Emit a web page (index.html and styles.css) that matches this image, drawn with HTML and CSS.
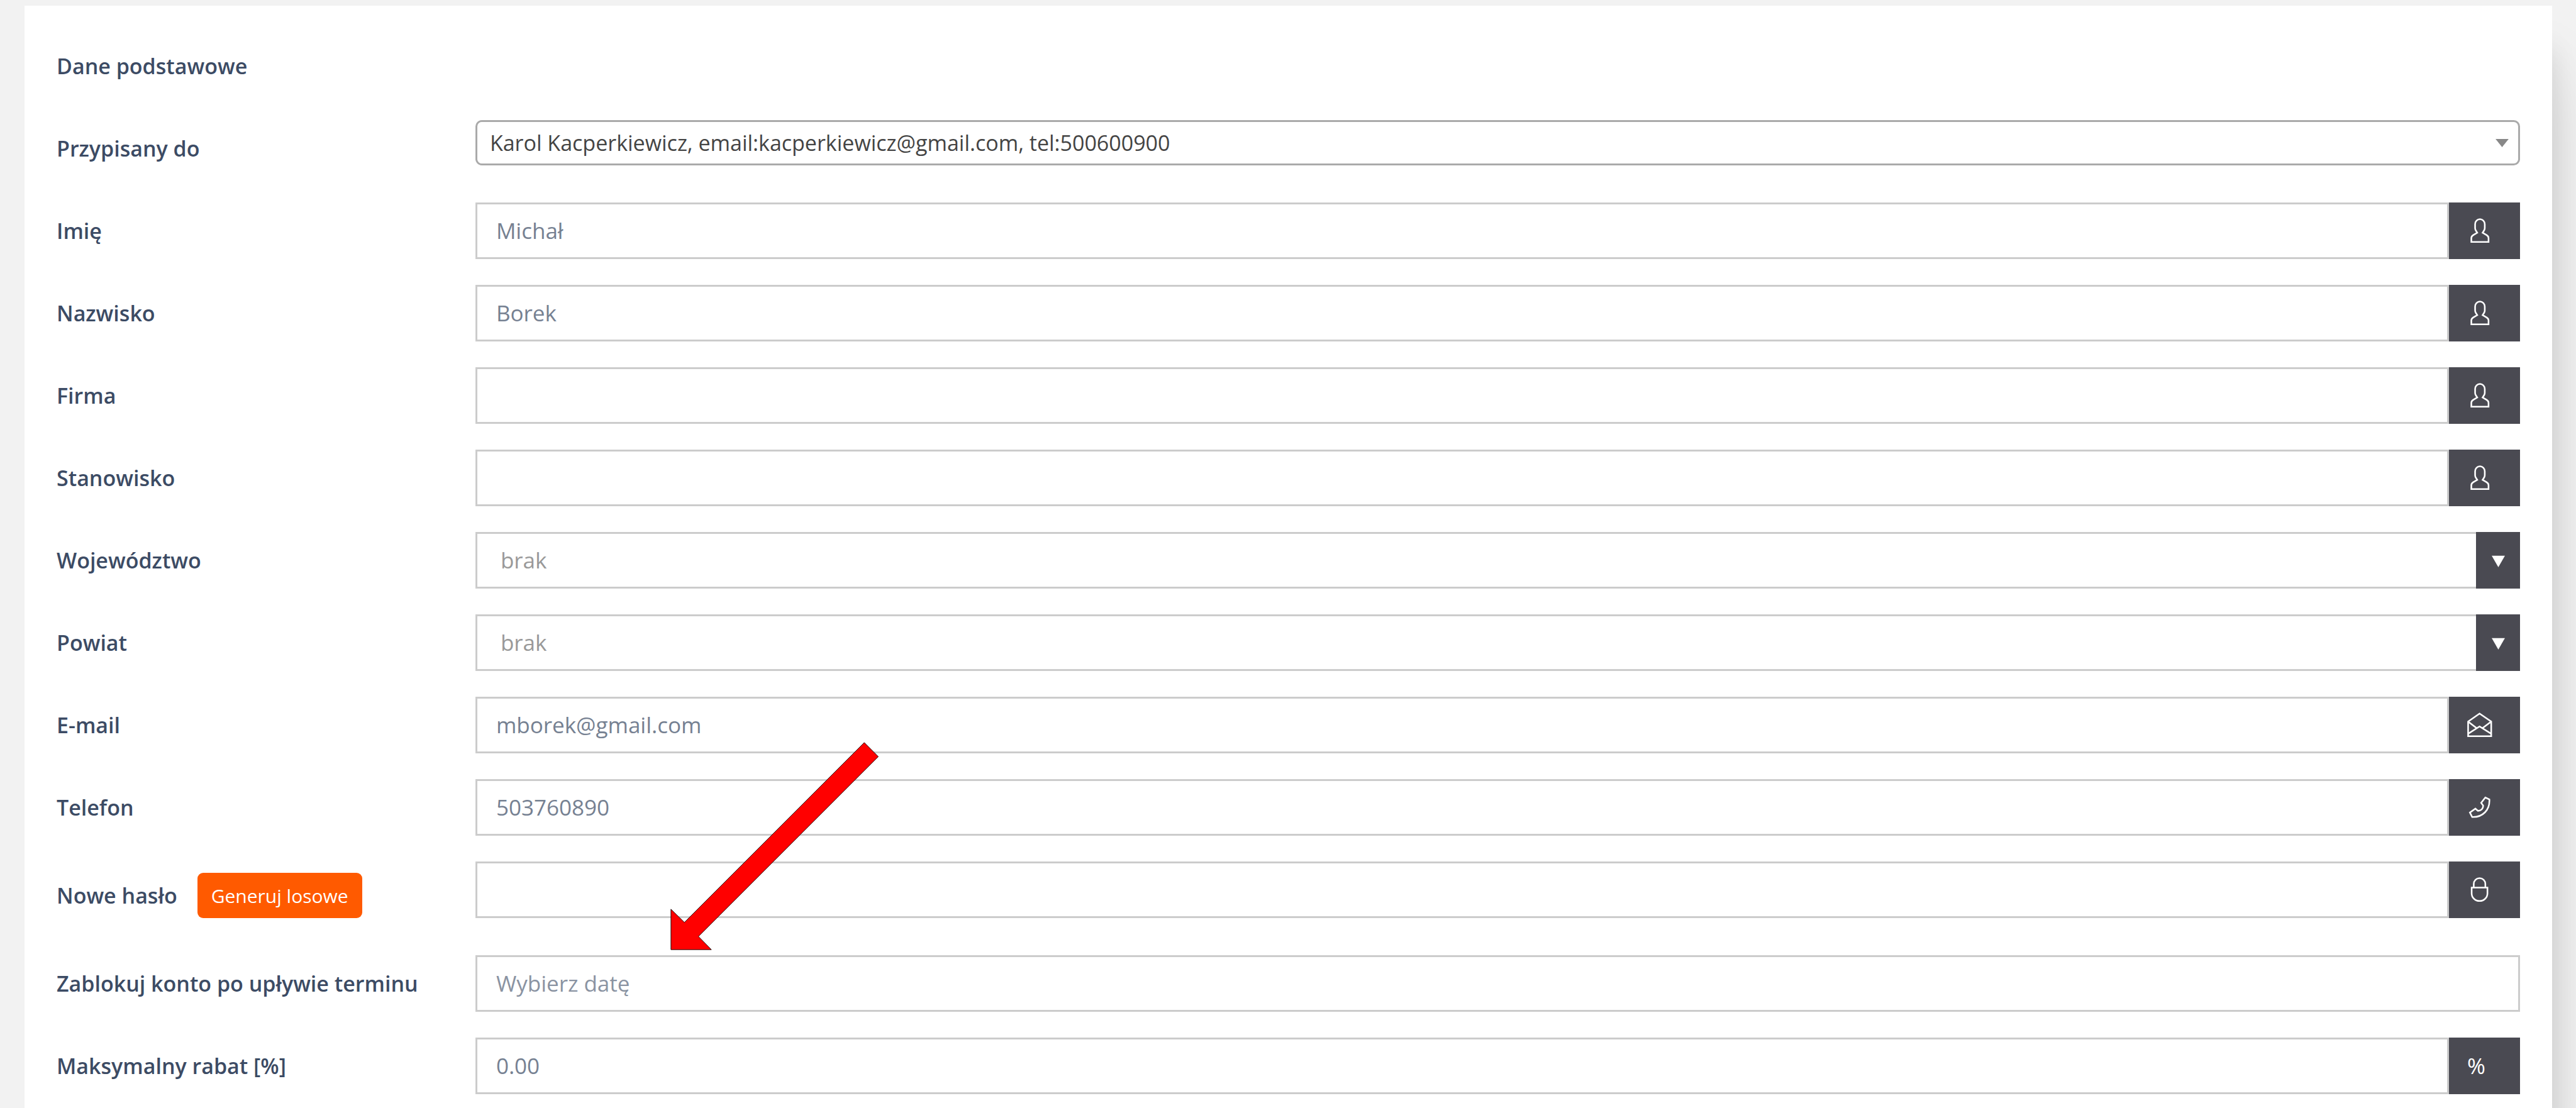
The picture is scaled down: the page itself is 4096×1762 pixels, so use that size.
FILE: index.html
```html
<!DOCTYPE html>
<html lang="pl">
<head>
    <meta charset="UTF-8">
    <meta name="viewport" content="width=device-width, initial-scale=1.0">
    <title>Dane podstawowe</title>
    <link rel="stylesheet" href="styles.css">
</head>
<body>
    <!-- shared icons -->
    <svg class="sprite" aria-hidden="true">
        <symbol id="icon-user" viewBox="0 0 48 48">
            <path d="M7.700 44.200V37c0-2.600 1.300-4.100 3.500-5.500L18.700 27l-2.700-4.200c-.900-1.400-1.300-2.600-1.300-4.300V11a9 9.300 0 0 1 18 0v7.500c0 1.700-.4 2.900-1.300 4.300L28.700 27l7.500 4.500c2.200 1.400 3.500 2.900 3.500 5.500v7.200z"/>
        </symbol>
        <symbol id="icon-mail" viewBox="0 0 48 48">
            <path d="M1.700 17 23 2l21.700 15v27.300h-43zM1.700 17l15.600 12M44.700 17 28.700 29M1.700 39.700 23 26l21.700 13.700"/>
        </symbol>
        <symbol id="icon-phone" viewBox="0 0 48 48">
            <path d="M33.700 5l7.600 3.500C42.500 28 29 42 9.300 41.300L5 33l10.300-7.300 4.700 4c5.500 0 10-4 9.700-9.700L26 15z"/>
        </symbol>
        <symbol id="icon-lock" viewBox="0 0 48 48">
            <path d="M12.200 19v-6.500a10.800 10.800 0 0 1 21.600 0V19M8.300 19.300h29.400V30a14.700 14.300 0 0 1-29.400 0z"/>
        </symbol>
    </svg>

    <form class="card">
        <h2 class="heading">Dane podstawowe</h2>

        <div class="row">
            <div class="label"><label for="owner">Przypisany do</label></div>
            <div class="picker">
                <select id="owner" class="picker-select">
                    <option>Karol Kacperkiewicz, email:kacperkiewicz@gmail.com, tel:500600900</option>
                </select>
                <svg class="picker-caret" viewBox="0 0 24 15" aria-hidden="true"><path d="M0 0h24L12 15z"/></svg>
            </div>
        </div>

        <div class="row">
            <div class="label"><label for="firstName">Imię</label></div>
            <div class="field">
                <input type="text" id="firstName" class="control" value="Michał">
                <span class="addon"><svg class="icon"><use href="#icon-user"/></svg></span>
            </div>
        </div>

        <div class="row">
            <div class="label"><label for="lastName">Nazwisko</label></div>
            <div class="field">
                <input type="text" id="lastName" class="control" value="Borek">
                <span class="addon"><svg class="icon"><use href="#icon-user"/></svg></span>
            </div>
        </div>

        <div class="row">
            <div class="label"><label for="company">Firma</label></div>
            <div class="field">
                <input type="text" id="company" class="control">
                <span class="addon"><svg class="icon"><use href="#icon-user"/></svg></span>
            </div>
        </div>

        <div class="row">
            <div class="label"><label for="position">Stanowisko</label></div>
            <div class="field">
                <input type="text" id="position" class="control">
                <span class="addon"><svg class="icon"><use href="#icon-user"/></svg></span>
            </div>
        </div>

        <div class="row">
            <div class="label"><label for="region">Województwo</label></div>
            <div class="field">
                <select id="region" class="control control-select">
                    <option>brak</option>
                </select>
                <span class="addon addon-arrow"><svg class="arrow-down" viewBox="0 0 24 24"><path d="M0 3h24L12 24z"/></svg></span>
            </div>
        </div>

        <div class="row">
            <div class="label"><label for="county">Powiat</label></div>
            <div class="field">
                <select id="county" class="control control-select">
                    <option>brak</option>
                </select>
                <span class="addon addon-arrow"><svg class="arrow-down" viewBox="0 0 24 24"><path d="M0 3h24L12 24z"/></svg></span>
            </div>
        </div>

        <div class="row">
            <div class="label"><label for="email">E-mail</label></div>
            <div class="field">
                <input type="email" id="email" class="control" value="mborek@gmail.com">
                <span class="addon"><svg class="icon"><use href="#icon-mail"/></svg></span>
            </div>
        </div>

        <div class="row">
            <div class="label"><label for="phone">Telefon</label></div>
            <div class="field">
                <input type="tel" id="phone" class="control" value="503760890">
                <span class="addon"><svg class="icon"><use href="#icon-phone"/></svg></span>
            </div>
        </div>

        <div class="row row-password">
            <div class="label">
                <label for="password">Nowe hasło</label>
                <button type="button" class="btn">Generuj losowe</button>
            </div>
            <div class="field">
                <input type="password" id="password" class="control">
                <span class="addon"><svg class="icon"><use href="#icon-lock"/></svg></span>
            </div>
        </div>

        <div class="row">
            <div class="label"><label for="blockDate">Zablokuj konto po upływie terminu</label></div>
            <div class="field">
                <input type="text" id="blockDate" class="control" placeholder="Wybierz datę">
                <svg class="pointer" viewBox="0 0 386 386" aria-hidden="true">
                    <path d="M1 310l25 24.500L359.500 1l26 26L52 360.500 76 385H1z"/>
                </svg>
            </div>
        </div>

        <div class="row">
            <div class="label"><label for="discount">Maksymalny rabat [%]</label></div>
            <div class="field">
                <input type="text" id="discount" class="control" value="0.00">
                <span class="addon">%</span>
            </div>
        </div>
    </form>
</body>
</html>
```
FILE: styles.css
```css
:root {
    --font: "Segoe UI", "Open Sans", "Noto Sans", sans-serif;
    --background: #f2f2f2;
    --label: #3c4b64;
    --value: #768192;
    --border: #ccc;
    --addon: #4a4a52;
    --accent: #ff5a00;
}
* {
    box-sizing: border-box;
}
body {
    margin: 0;
    padding: 9px 38px 0 39px;
    background: var(--background);
    color: var(--label);
    font-family: var(--font);
    font-size: 35px;
    line-height: 50px;
}
.sprite {
    display: none;
}
.card {
    display: flex;
    flex-direction: column;
    gap: 41px;
    min-height: calc(100vh - 9px);
    padding: 51px 51px 20px;
    background: #fff;
    box-shadow: 0 69px 40px rgba(0, 0, 0, 0.1), 0 103px 100px rgba(0, 0, 0, 0.12);
    /* shadow only falls to the right */
    clip-path: inset(0 -38px 0 0);
}
.heading {
    margin: 0;
    padding: 20px 0;
    font-size: 34px;
    font-weight: 600;
}
.row {
    display: grid;
    grid-template-columns: 17% 1fr;
    align-items: start;
}
.label {
    display: flex;
    align-items: center;
    gap: 32px;
    min-height: 90px;
    font-size: 34px;
    font-weight: 600;
    white-space: nowrap;
}
.row-password .label {
    min-height: 108px;
}
.field {
    position: relative;
    display: flex;
    height: 90px;
}
.control {
    flex: 1;
    min-width: 0;
    margin: 0;
    padding: 0 30px;
    border: 3px solid var(--border);
    border-radius: 0;
    background: #fff;
    color: var(--value);
    font: inherit;
    outline: none;
}
.control::placeholder {
    color: #8a93a2;
    opacity: 1;
}
.control-select {
    appearance: none;
    padding: 0 37px;
    border-right: 0;
    color: #999;
}
.addon {
    display: flex;
    align-items: center;
    width: 113px;
    padding-left: 29px;
    background: var(--addon);
    color: #fff;
}
.addon-arrow {
    justify-content: center;
    width: 70px;
    padding: 0;
}
.icon {
    width: 41px;
    height: 41px;
    fill: none;
    stroke: #fff;
    stroke-width: 3;
}
.arrow-down {
    width: 21px;
    height: 21px;
    fill: #fff;
}
.picker {
    display: grid;
    align-items: center;
}
.picker-select,
.picker-caret {
    grid-area: 1 / 1;
}
.picker-select {
    appearance: none;
    width: 100%;
    height: 72px;
    padding: 0 60px 0 20px;
    border: 3px solid #aaa;
    border-radius: 10px;
    background: #fff;
    color: #444;
    font: inherit;
    font-size: 34px;
    outline: none;
}
.picker-caret {
    justify-self: end;
    width: 21px;
    height: 13px;
    margin-right: 18px;
    fill: #888;
    pointer-events: none;
}
.btn {
    height: 72px;
    padding: 0 22px;
    border: 0;
    border-radius: 9px;
    background: var(--accent);
    color: #fff;
    font-family: inherit;
    font-size: 30px;
    cursor: pointer;
}
/* red arrow over the form, points at the date field */
.pointer {
    position: absolute;
    left: 310px;
    bottom: 98px;
    width: 331px;
    height: 331px;
    fill: #f00;
    stroke: #000;
    stroke-width: 1;
    pointer-events: none;
}
```
